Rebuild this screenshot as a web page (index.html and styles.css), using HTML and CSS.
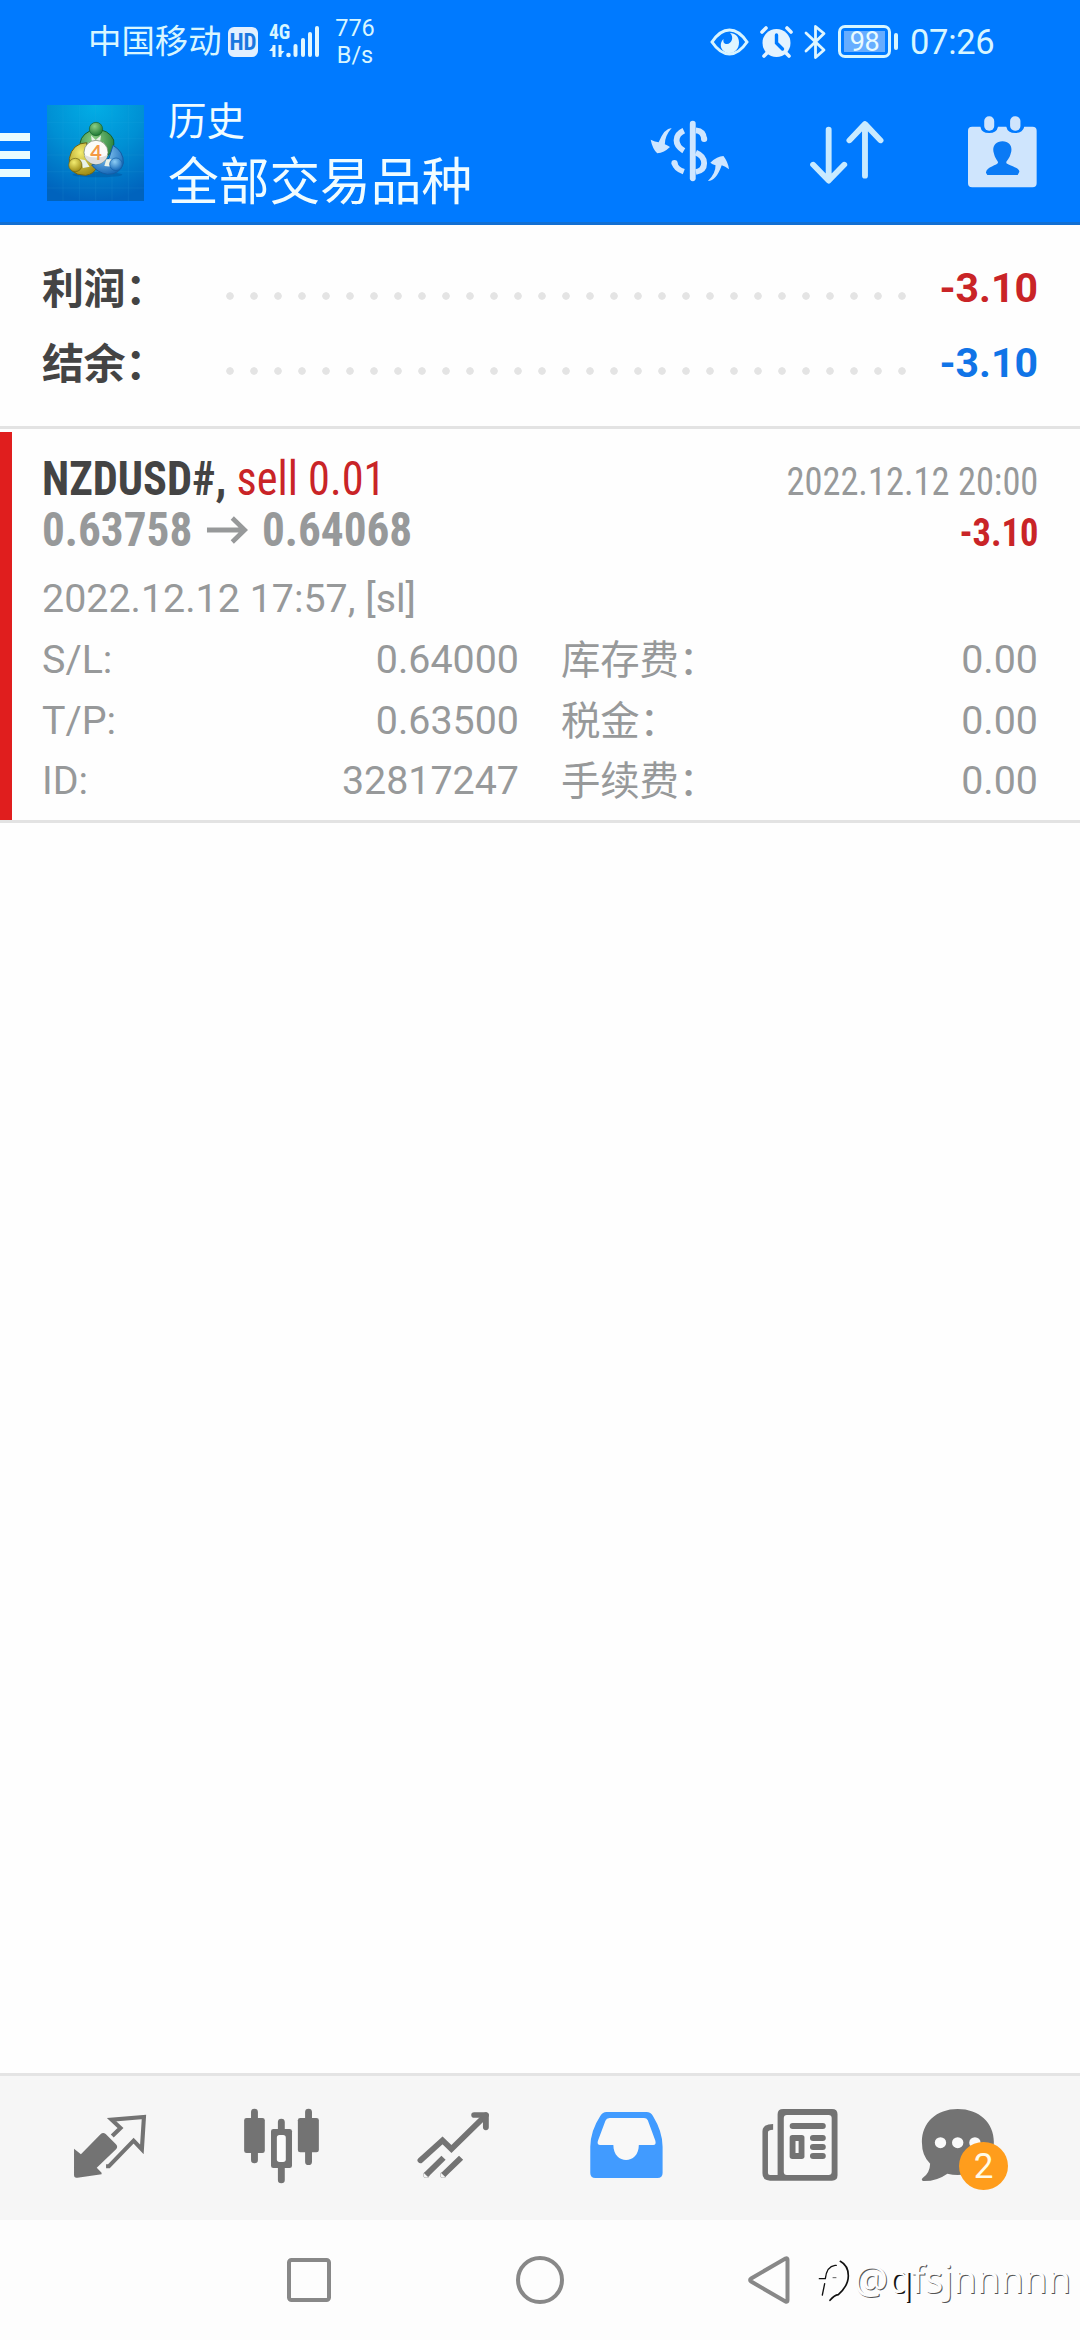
FILE: index.html
```html
<!DOCTYPE html>
<html lang="zh-CN">
<head>
<meta charset="utf-8">
<title>历史</title>
<link rel="stylesheet" href="styles.css">
</head>
<body>
<header class="header">
  <div class="status">
    <div class="status-left">
      <span class="carrier">中国移动</span>
      <span class="hd">HD</span>
      <div class="signal">
        <span class="net">4G</span>
        <svg width="52" height="34" viewBox="0 0 52 34" fill="#e0f7ff">
          <path d="M5 20v12M11 20v12" stroke="#e0f7ff" stroke-width="3"/>
          <path d="M0 26L5.500 20v6zM10 32l5.500-6H10z"/>
          <circle cx="19.500" cy="30" r="2.300"/>
          <rect x="24.500" y="19" width="4" height="13" rx="2"/>
          <rect x="32" y="13" width="4" height="19" rx="2"/>
          <rect x="39" y="7" width="4" height="25" rx="2"/>
          <rect x="46" y="1" width="4" height="31" rx="2"/>
        </svg>
      </div>
      <div class="speed"><span>776</span><span>B/s</span></div>
    </div>
    <div class="status-right">
      <svg width="39" height="28" viewBox="0 0 39 28">
        <path d="M2 14Q10 2 19.500 2T37 14Q29 26 19.500 26T2 14Z" fill="none" stroke="#d8f4ff" stroke-width="3"/>
        <path d="M20 5c4.500 4 1.500 11-3 11-3 0-4-2-3.500-5-5.500 5.500-2 14 6 14 5.500 0 9.500-4.500 9.500-10.500S25 5 20 5z" fill="#e0f5ff"/>
      </svg>
      <svg width="33" height="32" viewBox="0 0 33 32">
        <circle cx="16.500" cy="17" r="14" fill="#e4f3ff"/>
        <path d="M2 6l4-4M31 6l-4-4M4 30l3-3M29 30l-3-3" stroke="#e4f3ff" stroke-width="3.600" stroke-linecap="round"/>
        <path d="M16.500 9v8l6 6" fill="none" stroke="#007aff" stroke-width="3.400" stroke-linecap="round"/>
      </svg>
      <svg width="22" height="36" viewBox="0 0 22 36">
        <path d="M2 9l18 17-8.500 7.500v-31L20 9.500 2 27" fill="none" stroke="#dff6ff" stroke-width="2.800" stroke-linejoin="round" stroke-linecap="round"/>
      </svg>
      <div class="battery"><div class="battery-body"><span>98</span></div><i class="battery-cap"></i></div>
      <span class="clock">07:26</span>
    </div>
  </div>
  <div class="toolbar">
    <div class="menu"><i></i><i></i><i></i></div>
    <svg class="logo" width="97" height="96" viewBox="9 15 291 288" preserveAspectRatio="none">
      <defs>
        <radialGradient id="sky" cx=".5" cy="0" r="1"><stop offset="0" stop-color="#02aee6"/><stop offset=".5" stop-color="#0090d4"/><stop offset="1" stop-color="#0063bd"/></radialGradient>
        <radialGradient id="green" cx=".4" cy=".3" r=".7"><stop offset="0" stop-color="#8ccf86"/><stop offset="1" stop-color="#1f7a35"/></radialGradient>
        <radialGradient id="yellow" cx=".4" cy=".3" r=".7"><stop offset="0" stop-color="#f3ec70"/><stop offset="1" stop-color="#a08d15"/></radialGradient>
        <radialGradient id="blue" cx=".4" cy=".3" r=".7"><stop offset="0" stop-color="#8dcdf5"/><stop offset="1" stop-color="#1769b8"/></radialGradient>
      </defs>
      <rect x="9" y="15" width="291" height="288" fill="url(#sky)"/>
      <path d="M9 67h291M9 116h291M9 165h291M9 215h291M9 264h291M57 15v288M106 15v288M155 15v288M204 15v288M253 15v288" stroke="#39b3e8" stroke-opacity=".18" stroke-width="2"/>
      <ellipse cx="160" cy="224" rx="75" ry="8" fill="#00458c" opacity=".35"/>
      <path d="M108 130A52 46 0 0 1 209 120Q212 145 198 160L165 195 150 135Z" fill="url(#green)" stroke="#17602c" stroke-width="3"/>
      <path d="M128 128Q85 130 76 175 70 226 125 226 150 222 160 200L130 170Z" fill="url(#yellow)" stroke="#6e6414" stroke-width="3"/>
      <path d="M207 136Q240 155 238 190 228 224 190 223 160 218 143 195L195 175Z" fill="url(#blue)" stroke="#135da5" stroke-width="3"/>
      <path d="M141 106l14 14 16-14-4 30h-22zM107 178l16 2 14 20-20 4zM187 178l16 0 0 22-22-2z" fill="#e9f3e8"/>
      <circle cx="156" cy="87" r="20" fill="url(#green)" stroke="#17602c" stroke-width="2"/>
      <circle cx="94" cy="195" r="20" fill="url(#yellow)" stroke="#6e6414" stroke-width="2"/>
      <circle cx="216" cy="193" r="19" fill="url(#blue)" stroke="#135da5" stroke-width="2"/>
      <circle cx="156" cy="157" r="36" fill="#fbfbf8" stroke="#667b60" stroke-width="2"/>
      <path d="M121 165Q156 180 191 165A36 36 0 0 1 121 165Z" fill="#ddd"/>
      <text x="156" y="179" text-anchor="middle" class="logo-num">4</text>
    </svg>
    <div class="titles"><div class="title">历史</div><div class="subtitle">全部交易品种</div></div>
    <div class="actions">
      <svg width="80" height="140" viewBox="320 255 232 420" preserveAspectRatio="none" fill="#cfe6ff">
        <path d="M383 384Q362 384 345 427Q335 426 322 419Q327 446 341 460Q361 458 378 441Q371 437 363 433Q363 407 383 384Z"/>
        <path d="M488 543Q512 543 528 496Q538 499 549 508Q547 487 533 468Q515 468 495 488Q501 493 510 496Q511 520 488 543Z"/>
        <path d="M418 392Q397 402 397 421T418 452M391 489Q395 507 418 515M453 391Q476 393 477 418M453 458Q477 468 477 490T453 516" fill="none" stroke="#cfe6ff" stroke-width="17"/>
        <circle cx="477" cy="417" r="9"/><circle cx="391" cy="489" r="9"/>
        <path d="M444 371V535" stroke="#cfe6ff" stroke-width="17" stroke-linecap="round"/>
      </svg>
      <svg width="74" height="140" viewBox="782 255 214 420" preserveAspectRatio="none" fill="none" stroke="#c8eaff" stroke-width="17" stroke-linecap="round" stroke-linejoin="round">
        <path d="M836 389V540M791 494L836 542 881 494M941 527V375M896 421L941 372 986 421"/>
      </svg>
      <svg width="69" height="140" viewBox="1242 255 200 420" preserveAspectRatio="none" fill="#cfe5fd">
        <path d="M1254 380H1278Q1281 399 1303 399T1329 380H1353Q1357 399 1379 399T1405 380H1429Q1441 380 1441 392V550Q1441 562 1429 562H1254Q1242 562 1242 550V392Q1242 380 1254 380Z"/>
        <rect x="1289" y="349" width="29" height="43" rx="14"/><rect x="1364" y="349" width="30" height="43" rx="14"/>
        <path d="M1342 424C1364 424 1372 442 1366 460C1363 476 1353 482 1353 488C1353 495 1390 500 1391 515L1386 525H1298L1294 518C1294 500 1329 495 1329 488C1329 482 1320 476 1317 460C1311 442 1320 424 1342 424Z" fill="#0a7af5"/>
      </svg>
    </div>
  </div>
</header>

<main class="main">
  <section class="summary">
    <div class="sum-row"><span class="sum-label">利润：</span><i class="dots"></i><span class="sum-value loss">-3.10</span></div>
    <div class="sum-row"><span class="sum-label">结余：</span><i class="dots"></i><span class="sum-value balance">-3.10</span></div>
  </section>
  <article class="deal">
    <div class="deal-head"><span class="symbol">NZDUSD#, <span class="side">sell 0.01</span></span><span class="close-time">2022.12.12 20:00</span></div>
    <div class="deal-head"><span class="prices">0.63758 <svg width="44" height="28" viewBox="0 0 44 28" fill="none" stroke="#97999a" stroke-width="5"><path d="M0 14H41M27 2L40 14 27 26"/></svg> 0.64068</span><span class="profit">-3.10</span></div>
    <div class="open-time">2022.12.12 17:57, [sl]</div>
    <div class="details">
      <div class="pair"><span>S/L:</span><span>0.64000</span></div><div class="pair"><span class="cjk">库存费：</span><span>0.00</span></div>
      <div class="pair"><span>T/P:</span><span>0.63500</span></div><div class="pair"><span class="cjk">税金：</span><span>0.00</span></div>
      <div class="pair"><span>ID:</span><span>32817247</span></div><div class="pair"><span class="cjk">手续费：</span><span>0.00</span></div>
    </div>
  </article>
</main>

<nav class="tabs">
  <svg viewBox="69.7 48 502.4 432" preserveAspectRatio="none" fill="#737373">
    <path d="M215 266L235 283 292 223Q299 215 307 222L336 252Q344 260 337 268L281 323 295 338V343L225 353Q215 355 215 345Z"/>
    <path d="M326 228L350 204 324 179 418 171 412 268 388 242 316 319H308" fill="none" stroke="#737373" stroke-width="12"/>
  </svg>
  <svg viewBox="572.1 48 502.4 432" preserveAspectRatio="none" fill="#737373">
    <path d="M739 156V300M896 156V305M817 186V215M817 310V360" stroke="#737373" stroke-width="20" stroke-linecap="round"/>
    <rect x="709" y="174" width="60" height="105" rx="7"/><rect x="865" y="174" width="61" height="103" rx="7"/>
    <rect x="787" y="207" width="61" height="117" rx="7"/><rect x="804" y="225" width="26" height="81" rx="8" fill="#fcfcfc"/>
  </svg>
  <svg viewBox="1074.500 48 502.4 432" preserveAspectRatio="none" fill="none" stroke="#737373" stroke-width="17">
    <path d="M1221 301L1285 241 1311 267 1411 166" stroke-linecap="round"/><path d="M1377 165H1411V202" stroke-linecap="round" stroke-linejoin="round"/>
    <path d="M1237 345L1288 293M1287 345L1339 293"/><circle cx="1238" cy="345" r=".5"/><circle cx="1287" cy="345" r=".5"/>
  </svg>
  <svg viewBox="8.700 48 502.4 432" preserveAspectRatio="none">
    <path d="M193 156H309Q322 156 328 168Q356 215 356 260V339Q356 354 341 354H161Q146 354 146 339V260Q147 212 175 168Q182 156 193 156Z" fill="#419bff"/>
    <path d="M202 174H302Q310 174 313 181L335 242Q338 255 329 255H287C287 315 213 315 213 255H175Q165 255 168 243L190 182Q193 174 202 174Z" fill="#f8f8f8"/>
  </svg>
  <svg viewBox="511.100 48 502.4 432" preserveAspectRatio="none">
    <path d="M706 147H848Q864 147 864 163V346Q864 362 848 362H668Q646 362 646 340V214Q646 192 677 192V209Q662 209 662 217V339Q662 345 668 345H690V163Q690 147 706 147Z" fill="#737373"/>
    <rect x="708" y="165" width="139" height="180" rx="9" fill="#f9f9f9"/>
    <path d="M734 198H821M793 234H821M793 261H821M793 288H821" stroke="#737373" stroke-width="18" stroke-linecap="round"/>
    <rect x="725" y="225" width="43" height="72" rx="8" fill="#737373"/><rect x="742" y="243" width="9" height="36" fill="#f9f9f9"/>
  </svg>
  <div class="chat">
    <svg viewBox="1013.500 48 502.4 432" preserveAspectRatio="none">
      <path d="M1213 147C1275 147 1318 188 1318 246C1318 306 1274 345 1213 345Q1198 345 1183 341Q1152 364 1113 363Q1105 360 1112 353Q1132 339 1133 311Q1109 288 1109 246C1109 188 1151 147 1213 147Z" fill="#737373"/>
      <circle cx="1163" cy="248" r="16.500" fill="#fafafa"/><circle cx="1213" cy="248" r="16.500" fill="#fafafa"/><circle cx="1263" cy="248" r="16.500" fill="#fafafa"/>
    </svg>
    <span class="badge">2</span>
  </div>
</nav>

<footer class="sysbar">
  <svg width="44" height="44" viewBox="0 0 44 44"><rect x="2" y="2" width="40" height="40" rx="2.500" fill="none" stroke="#888" stroke-width="4"/></svg>
  <svg width="48" height="48" viewBox="0 0 48 48"><circle cx="24" cy="24" r="22" fill="none" stroke="#888" stroke-width="4"/></svg>
  <svg width="42" height="48" viewBox="0 0 42 48"><path d="M39.500 3.800V44.200Q39.500 46.500 37.500 45.500L3.200 25.600Q1 24 3.200 22.400L37.500 2.500Q39.500 1.500 39.500 3.800Z" fill="none" stroke="#888" stroke-width="4"/></svg>
  <div class="watermark">
    <svg width="36" height="50" viewBox="55 50 108 150" fill="none" stroke="#111" stroke-linecap="round">
      <path d="M68 170L75 136M59 121H76M77 121Q81 84 106 81H110" stroke-width="4"/>
      <path d="M122 69Q146 82 146 112T116 169Q104 170 91 186" stroke-width="5"/><path d="M100 118H109" stroke-width="2"/>
    </svg>
    <span>@<b>q</b>fsjnnnnn</span>
  </div>
</footer>
</body>
</html>
```
FILE: styles.css
```css
* { box-sizing: border-box; }
body {
  margin: 0;
  width: 1080px;
  height: 2340px;
  display: flex;
  flex-direction: column;
  background: #fefefe;
  color: #97999a;
  font-family: Roboto, "Noto Sans CJK SC", sans-serif;
  overflow: hidden;
}
svg { display: block; flex: none; }

.header {
  height: 225px;
  background: #007aff;
  border-bottom: 3px solid #126fd2;
  color: #f0fcff;
}
.status {
  height: 85px;
  display: flex;
  justify-content: space-between;
  padding: 0 85px 0 88px;
  color: #d8f6ff;
}
.status-left, .status-right { display: flex; align-items: center; height: 83px; }
.carrier { font-size: 33.4px; line-height: 40px; width: 140px; padding-top: 1px; white-space: nowrap; }
.hd {
  width: 30px; height: 30px; border-radius: 6px;
  background: #e2f0ff; color: #1a77df;
  font: 700 23px/31px "Roboto Condensed", Roboto, sans-serif;
  text-align: center;
}
.signal { position: relative; margin-left: 11px; }
.net { position: absolute; left: 0; top: -2px; font: 700 19.5px/20px "Roboto Condensed", Roboto, sans-serif; }
.speed {
  margin-left: 13px; display: flex; flex-direction: column; align-items: center;
  width: 42px; font-size: 23.5px; line-height: 27px;
}
.battery { display: flex; align-items: center; gap: 3px; margin-left: 12px; }
.battery-body {
  width: 53px; height: 33px; padding: 3px;
  border: 3px solid #d8f6ff; border-radius: 7px;
}
.battery-body span {
  display: block; height: 21px; background: #66adff; color: #e9fbff;
  font-size: 27px; line-height: 22px; text-align: center; letter-spacing: -0.5px;
}
.battery-cap { width: 4px; height: 17px; border-radius: 2px; background: #d8f6ff; }
.status-right svg + svg { margin-left: 11px; }
.clock { font-size: 34.5px; margin-left: 12px; width: 85px; line-height: 40px; letter-spacing: -0.3px; }

.toolbar { height: 137px; display: flex; }
.menu { width: 30px; padding-top: 48px; display: flex; flex-direction: column; gap: 10px; }
.menu i { height: 8px; background: #e9fcff; }
.logo { margin: 20px 0 0 17px; }
.logo-num { font: 700 60px Lato, sans-serif; fill: #f49945; }
.titles { margin-left: 24px; padding-top: 12px; }
.title { font-size: 38.5px; line-height: 50px; }
.subtitle { font-size: 50.7px; line-height: 72px; }
.actions { margin-left: auto; margin-right: 43px; display: flex; }
.actions svg + svg { margin-left: 80px; }
.actions svg:last-child { margin-left: 84px; }

.main { flex: 1; }
.summary { height: 204px; padding: 26px 42px 0; border-bottom: 3px solid #e3e3e3; }
.sum-row { display: flex; height: 75px; line-height: 75px; font-size: 41px; font-weight: 700; }
.sum-label { width: 176px; padding-top: 1px; color: #444; font-size: 42px; letter-spacing: -0.4px; white-space: nowrap; }
.dots {
  width: 696px; height: 24px; margin-top: 33px;
  background: radial-gradient(circle, #e4e4e4 3.4px, transparent 4.1px) 0 0 / 24px 24px;
}
.sum-value { margin-left: auto; }
.loss, .side, .profit { color: #c92427; }
.balance { color: #1074e7; }

.deal {
  margin-top: 3px; height: 391px; padding: 21px 42px 0;
  background: linear-gradient(#e01e1e, #e01e1e) 0 0 / 12px 388px no-repeat;
  border-bottom: 3px solid #e3e3e3;
  font-size: 39.4px;
}
.deal-head {
  display: flex; justify-content: space-between; height: 51px; line-height: 51px;
  font-family: "Roboto Condensed", Roboto, sans-serif;
}
/* The deal header is set tighter than the stock condensed face. */
.symbol, .prices { transform-origin: left center; }
.close-time, .profit { transform-origin: right center; transform: scaleX(0.925); }
.symbol { font-size: 48px; font-weight: 700; color: #444; transform: scaleX(0.924); }
.side { font-weight: 400; }
.prices { font-size: 48px; font-weight: 700; display: flex; align-items: center; gap: 15px; transform: scaleX(0.942); }
.close-time { padding-top: 3px; }
.profit { font-weight: 700; padding-top: 3px; }
.open-time { margin-top: 19px; height: 49px; line-height: 49px; }
.details { margin-top: 7px; display: grid; grid-template-columns: 1fr 1fr; column-gap: 42px; }
.pair { display: flex; justify-content: space-between; height: 60.5px; line-height: 60.5px; }
.cjk { padding-top: 1px; letter-spacing: -0.1px; }

.tabs {
  height: 147px; padding-left: 24px; background: #f6f6f6; border-top: 3px solid #e4e4e4;
  display: grid; grid-template-columns: repeat(6, 173px);
}
.tabs svg { width: 173px; height: 144px; }
.chat { position: relative; }
.badge {
  position: absolute; left: 70px; top: 66px; width: 49px; height: 48px; border-radius: 50%;
  background: #ff9d1c; color: #fffbe8; font-size: 35px; line-height: 49px; text-align: center;
}

.sysbar {
  position: relative; height: 120px; padding: 0 290px 0 287px; background: #fdfdfd;
  display: flex; align-items: center; justify-content: space-between;
}
.watermark {
  position: absolute; left: 818px; top: 35px; display: flex;
  font: 38px/46px "Noto Sans", sans-serif; color: #fdfdfd; letter-spacing: 0.1px;
  text-shadow: 1px 1px 0 #555;
}
.watermark b { font-weight: 400; text-shadow: 2px 1px 0 #111; }
```
